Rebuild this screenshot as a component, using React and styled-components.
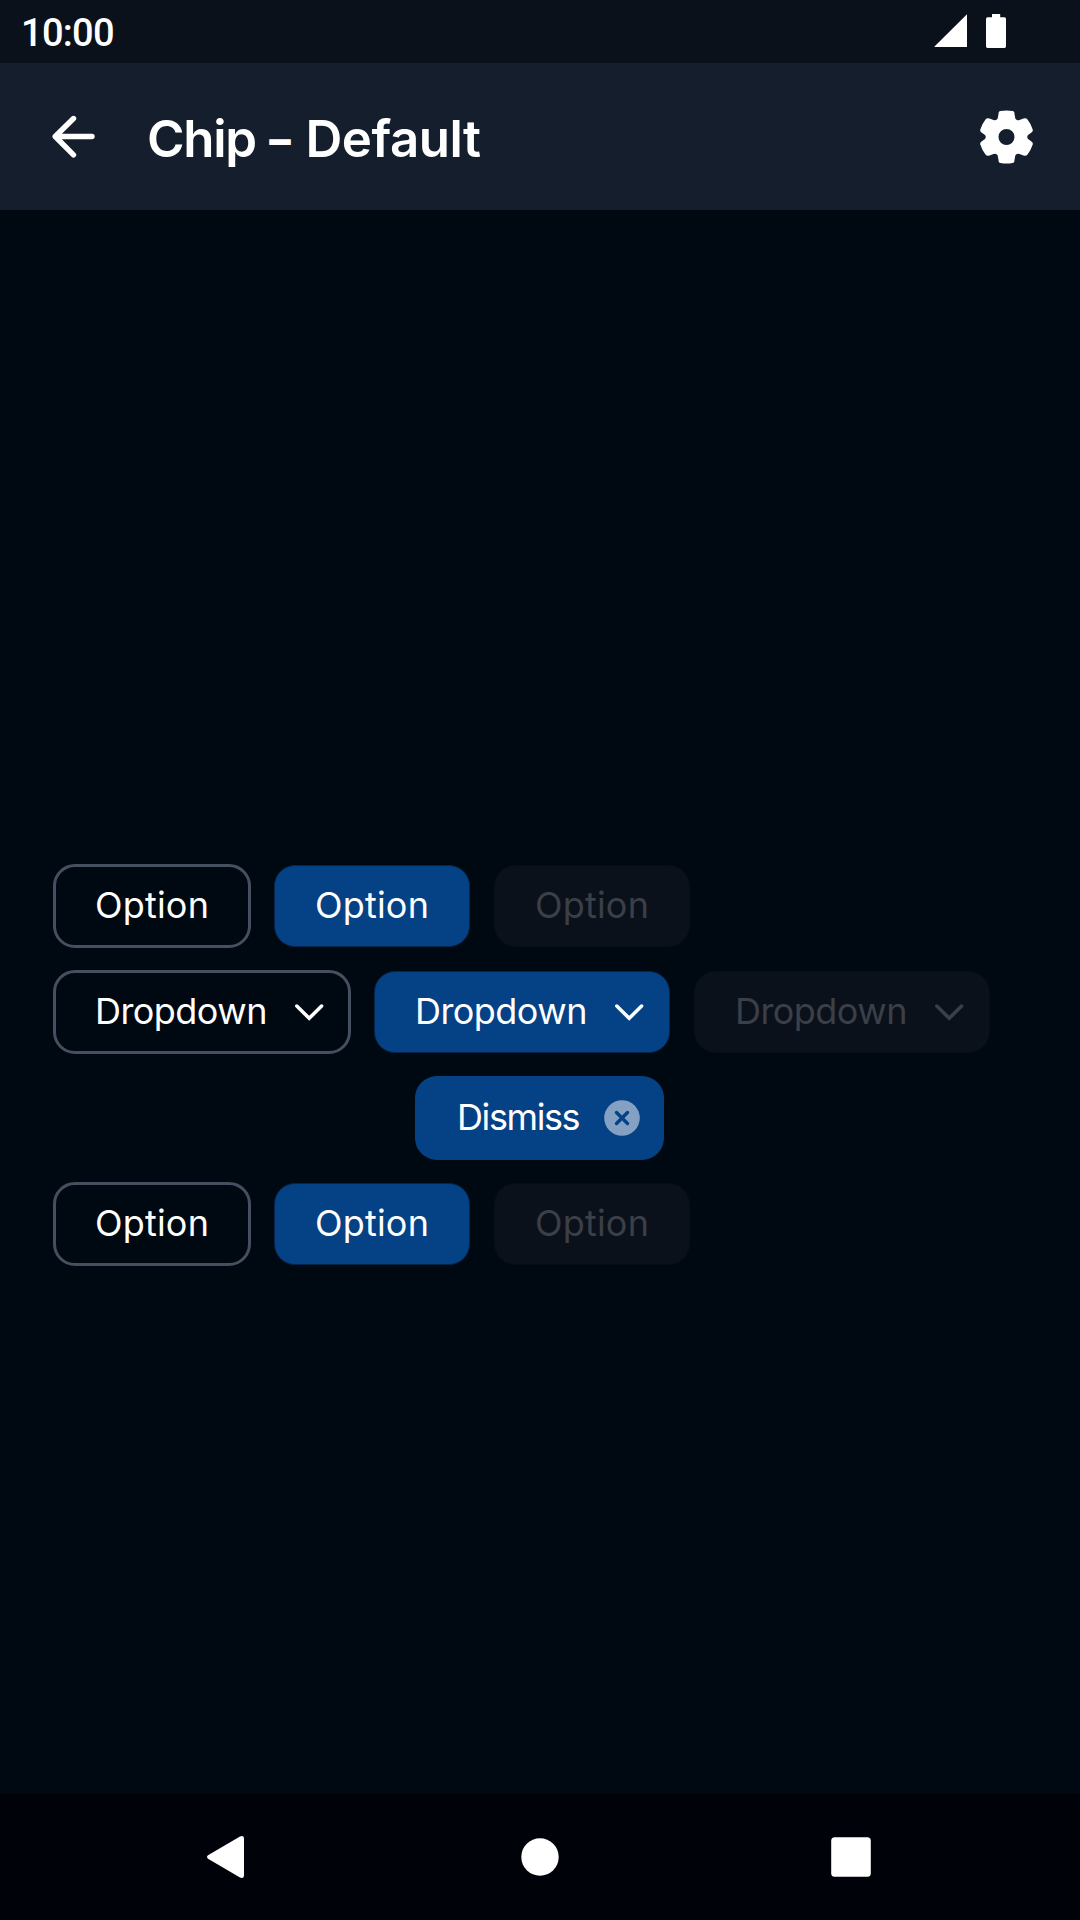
import React from "react";
import styled, { createGlobalStyle } from "styled-components";

const Global = createGlobalStyle`
  * { box-sizing: border-box; }
  body { margin: 0; background: #000811; }
`;

const Screen = styled.div`
  width: 1080px;
  height: 1920px;
  display: flex;
  flex-direction: column;
  background: #000811;
  color: #fff;
  font-family: Inter, Roboto, sans-serif;
  overflow: hidden;
`;

const StatusBar = styled.header`
  height: 63px;
  flex: none;
  display: flex;
  align-items: flex-start;
  justify-content: space-between;
  padding: 0 73px 0 21px;
  background: #0a111a;
`;

const Clock = styled.span`
  margin-top: 11px;
  font: 500 38px/44px Roboto, sans-serif;
  letter-spacing: -0.7px;
`;

const StatusIcons = styled.div`
  display: flex;
  align-items: center;
  gap: 18px;
  margin-top: 14px;
  svg { display: block; }
`;

const AppBar = styled.div`
  height: 147px;
  flex: none;
  display: flex;
  align-items: center;
  padding: 0 47px 0 52px;
  background: #141e2c;
`;

const IconButton = styled.button`
  border: 0;
  padding: 0;
  background: none;
  color: inherit;
  svg { display: block; }
`;

const Title = styled.h1`
  flex: 1;
  margin: 4px 0 0 51px;
  font-size: 51px;
  line-height: 60px;
  font-weight: 600;
  letter-spacing: -0.5px;
`;

const TitleLead = styled.span`
  letter-spacing: -1.3px;
`;

const TitleDash = styled.span`
  margin: 0 3px 0 1px;
  font-size: 43px;
  font-weight: 800;
  line-height: 1;
  vertical-align: 2px;
`;

const Content = styled.main`
  flex: 1;
  display: flex;
  flex-direction: column;
  justify-content: center;
  gap: 22px;
  padding: 126px 53px 0;
`;

const ChipRow = styled.div`
  display: flex;
  gap: 22px;
  justify-content: ${(p) => (p.$centered ? "center" : "flex-start")};
  ${(p) => p.$centered && "padding-right: 1px;"}
`;

const looks = {
  outlined: `
    border: 3px solid #444f5f;
    color: #fff;
  `,
  selected: `
    border: 1px solid #04264d;
    margin: 1px;
    background: #054185;
    color: #fff;
  `,
  disabled: `
    border: 1px solid #060d17;
    margin: 1px;
    background: #0a111b;
    color: #3b3f47;
  `,
  filled: `
    background: #054185;
    border: 0;
    color: #fff;
  `,
};

const sizes = {
  option: { width: 198, spacing: "0.2px" },
  dropdown: { width: 298, spacing: "-0.55px" },
  dismiss: { width: 249, spacing: "-1.4px" },
};

const inset = (p) => (p.$look === "selected" || p.$look === "disabled" ? 1 : 0);
const stroke = (p) => ({ outlined: 3, selected: 1, disabled: 1, filled: 0 })[p.$look];

const ChipBox = styled.button`
  flex: none;
  display: flex;
  align-items: center;
  justify-content: space-between;
  width: ${(p) => sizes[p.$kind].width - 2 * inset(p)}px;
  height: ${(p) => 84 - 2 * inset(p)}px;
  padding: 0 ${(p) => 24 - inset(p) - stroke(p)}px 0 ${(p) => 42 - inset(p) - stroke(p)}px;
  border-radius: ${(p) => 22 - inset(p)}px;
  background: none;
  font: 400 36px/44px Inter, Roboto, sans-serif;
  letter-spacing: ${(p) => sizes[p.$kind].spacing};
  white-space: nowrap;
  ${(p) => looks[p.$look]}
  svg { display: block; flex: none; }
`;

const ChipLabel = styled.span`
  padding-bottom: 2px;
`;

const NavBar = styled.nav`
  height: 126px;
  flex: none;
  display: flex;
  align-items: center;
  justify-content: space-between;
  padding: 0 209px 0 206px;
  background: #00020a;
  svg { display: block; }
  svg:nth-child(2) { margin-left: 3px; }
`;

const Chevron = () => (
  <svg width="34" height="34" viewBox="0 0 34 34" fill="none">
    <path d="M3.800 11.100L16.200 23.300L28.600 11.100" stroke="currentColor" strokeWidth="3.500" strokeLinecap="round" />
  </svg>
);

const Dismiss = () => (
  <svg width="36" height="36" viewBox="0 0 36 36">
    <circle cx="18" cy="18" r="17.800" fill="#84a1c3" />
    <path d="M12.500 12.500L23.500 23.500M23.500 12.500L12.500 23.500" stroke="#054185" strokeWidth="3.400" strokeLinecap="round" />
  </svg>
);

function Chip({ kind = "option", look, children }) {
  return (
    <ChipBox $kind={kind} $look={look} disabled={look === "disabled"}>
      <ChipLabel>{children}</ChipLabel>
      {kind === "dropdown" && <Chevron />}
      {kind === "dismiss" && <Dismiss />}
    </ChipBox>
  );
}

const states = ["outlined", "selected", "disabled"];

export default function App() {
  return (
    <Screen>
      <Global />
      <StatusBar>
        <Clock>10:00</Clock>
        <StatusIcons>
          <svg width="34" height="34" viewBox="0 0 34 34"><path d="M.5 33V32.500L33 0.300V33Z" fill="#fff" /></svg>
          <svg width="21" height="34" viewBox="0 0 21 34"><path d="M6 0H14.200V3.300H18.500Q20 3.300 20 5V32.300Q20 34 18.500 34H1.500Q0 34 0 32.300V5Q0 3.300 1.500 3.300H6Z" fill="#fff" /></svg>
        </StatusIcons>
      </StatusBar>
      <AppBar>
        <IconButton aria-label="Back">
          <svg width="44" height="44" viewBox="0 0 44 44" fill="none" stroke="#fff" strokeWidth="5.400" strokeLinecap="round" strokeLinejoin="round">
            <path d="M40 21.500H3.200M21.500 3.500L3.200 21.500L21.500 39.800" />
          </svg>
        </IconButton>
        <Title><TitleLead>Chip</TitleLead> <TitleDash>–</TitleDash> Default</Title>
        <IconButton aria-label="Settings">
          <svg width="54" height="54" viewBox="-27.500 -27 54 54">
            <path fill="#fff" fillRule="evenodd" d="M-6-26Q0-27 6-26Q8-26 8-23L8.800-18.500Q10-16 13-17L17-18.500Q19.500-19.500 21-17.500Q24.500-13 26-8Q27-6 25-4.500L21.500-2Q20 0 21.500 2L25 4.500Q27 6 26 8Q24.500 13 21 17.500Q19.500 19.500 17 18.500L13 17Q10 16 8.800 18.500L8 23Q8 26 6 26Q0 27-6 26Q-8 26-8 23L-8.800 18.500Q-10 16-13 17L-17 18.500Q-19.500 19.500-21 17.500Q-24.500 13-26 8Q-27 6-25 4.500L-21.500 2Q-20 0-21.500-2L-25-4.500Q-27-6-26-8Q-24.500-13-21-17.500Q-19.500-19.500-17-18.500L-13-17Q-10-16-8.800-18.500L-8-23Q-8-26-6-26ZM0-8A8 8 0 1 0 0 8A8 8 0 1 0 0-8Z" />
          </svg>
        </IconButton>
      </AppBar>
      <Content>
        <ChipRow>{states.map((s) => <Chip key={s} look={s}>Option</Chip>)}</ChipRow>
        <ChipRow>{states.map((s) => <Chip key={s} kind="dropdown" look={s}>Dropdown</Chip>)}</ChipRow>
        <ChipRow $centered><Chip kind="dismiss" look="filled">Dismiss</Chip></ChipRow>
        <ChipRow>{states.map((s) => <Chip key={s} look={s}>Option</Chip>)}</ChipRow>
      </Content>
      <NavBar>
        <svg width="40" height="44" viewBox="0 0 40 44"><path d="M2 20.300L34 1.500Q38 0 38 4V40Q38 44 34 42.500L2 23.700Q0 22 2 20.300Z" fill="#fff" /></svg>
        <svg width="38" height="38" viewBox="0 0 38 38"><circle cx="19" cy="19" r="18.700" fill="#fff" /></svg>
        <svg width="40" height="40" viewBox="0 0 40 40"><rect x=".2" y=".2" width="39.600" height="39.600" rx="3.500" fill="#fff" /></svg>
      </NavBar>
    </Screen>
  );
}
